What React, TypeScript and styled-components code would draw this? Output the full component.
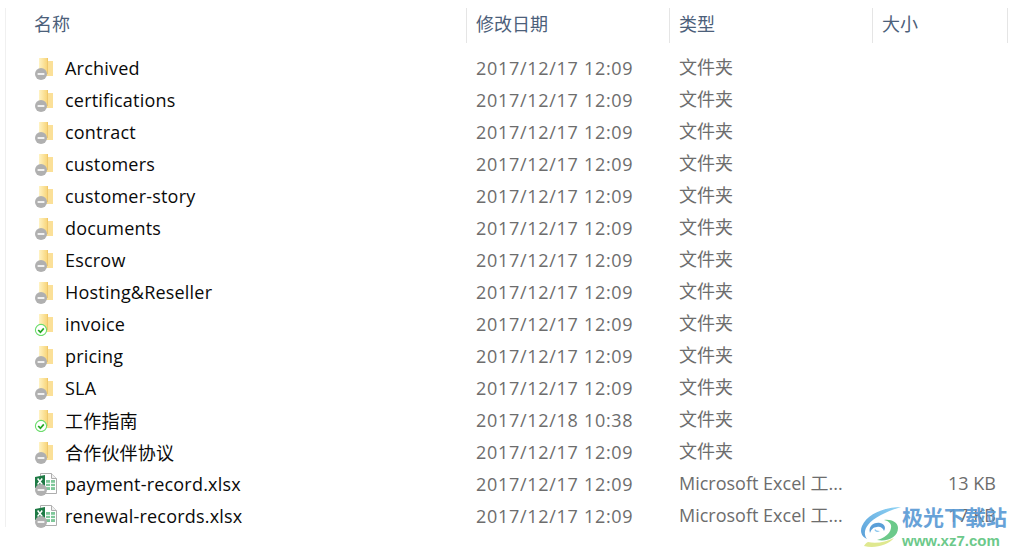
import React from 'react';
import styled, { createGlobalStyle } from 'styled-components';

const GlobalStyle = createGlobalStyle`
  html, body {
    margin: 0;
    width: 1018px;
    height: 557px;
    overflow: hidden;
    background: #fff;
    font-family: "Open Sans", "Noto Sans CJK SC", sans-serif;
  }
`;

const Page = styled.div`
  position: relative;
  width: 1018px;
  height: 557px;
  padding: 8px 0 0 5px;
  box-sizing: border-box;
`;

const Panel = styled.div`
  width: 1003px;
  height: 519px;
  border-left: 1px solid #f0f0f0;
`;

const Columns = styled.div`
  display: grid;
  grid-template-columns: 461px 203px 203px 135px;
`;

const HeaderRow = styled(Columns)`
  height: 35px;
  margin-bottom: 9px;
`;

const HeaderCell = styled.div<{ $first?: boolean }>`
  box-sizing: border-box;
  padding-left: ${(p) => (p.$first ? 28 : 9)}px;
  border-right: 1px solid #e5e5e5;
  color: #4c607a;
  font-size: 18px;
  line-height: 32px;
`;

const Row = styled(Columns)`
  height: 32px;
  align-items: center;
  font-size: 18px;
`;

const NameCell = styled.div`
  display: flex;
  align-items: center;
  gap: 12px;
  padding-left: 27px;
  color: #0a0a0a;
  letter-spacing: 0.2px;
`;

const Cell = styled.div`
  padding-left: 9px;
  color: #6d6d6d;
  white-space: nowrap;
  line-height: 31px;
  height: 32px;
`;

const DateCell = styled(Cell)`
  letter-spacing: 0.7px;
  line-height: 32px;
`;

const SizeCell = styled(Cell)`
  padding: 0 12px 0 0;
  text-align: right;
`;

const Icon = styled.svg`
  width: 20px;
  height: 24px;
  flex: none;
`;

const WideIcon = styled(Icon)`
  width: 24px;
  margin-right: -4px;
`;

const Watermark = styled.div`
  position: absolute;
  left: 858px;
  top: 504px;
  width: 156px;
  height: 48px;
  display: flex;
  pointer-events: none;
`;

const BrandText = styled.div`
  margin-left: 44px;
  display: flex;
  flex-direction: column;
`;

const BrandName = styled.div`
  color: #5b9bd5;
  font-family: "Noto Sans CJK SC", sans-serif;
  font-size: 21px;
  font-weight: 700;
  line-height: 25px;
  white-space: nowrap;
  opacity: 0.92;
`;

const BrandUrl = styled.div`
  color: #6cc98a;
  font-family: "Liberation Sans", sans-serif;
  font-size: 15px;
  font-weight: 700;
  line-height: 19px;
  margin-top: 2px;
  white-space: nowrap;
`;

const LogoMark = styled.svg`
  position: absolute;
  left: 0;
  top: 1px;
  width: 46px;
  height: 44px;
`;

type Status = 'off' | 'ok';

const GreyBadge = () => (
  <g>
    <circle cx="8" cy="18" r="6" fill="#b0b0b0" />
    <rect x="4.6" y="17.2" width="6.8" height="1.6" fill="#fff" />
  </g>
);

const Badge = ({ status }: { status: Status }) =>
  status === 'ok' ? (
    <g>
      <circle cx="8" cy="18" r="5.6" fill="#fff" stroke="#6bdc6b" strokeWidth="1.1" />
      <path d="M5.2 18l2.2 2.2 3.4-3.8" fill="none" stroke="#25a825" strokeWidth="1.7" />
    </g>
  ) : (
    <GreyBadge />
  );

const FolderIcon = ({ status }: { status: Status }) => (
  <Icon viewBox="0 0 20 24">
    <defs>
      <linearGradient id={`fold-${status}`} x1="0" y1="0" x2="1" y2="0">
        <stop offset="0" stopColor="#fff3c4" />
        <stop offset="1" stopColor="#f8d67c" />
      </linearGradient>
    </defs>
    <path d="M6 2l8 0v3h6v15H6z" fill="#fbe098" />
    <path d="M6 2h8v18H6z" fill={`url(#fold-${status})`} />
    <path d="M14 2h1v16h-1z" fill="#efc76c" />
    <Badge status={status} />
  </Icon>
);

const ExcelIcon = () => (
  <WideIcon viewBox="0 0 24 24">
    <path d="M7.5 1.5h11l5 5v15h-16z" fill="#fff" stroke="#aeaeae" />
    <path d="M18.5 1.5v5h5" fill="#f0f0f0" stroke="#aeaeae" />
    <path d="M13 8h9v10h-9z" fill="#7fc79a" />
    <path d="M13 11.3h9M13 14.6h9M17.5 8v10" stroke="#fff" />
    <path d="M2 5l10-2v13H2z" fill="#1e7a45" />
    <path d="M4.6 6.5l4.6 6M9.2 6.5l-4.6 6" stroke="#fff" strokeWidth="1.5" />
    <GreyBadge />
  </WideIcon>
);

const folderType = '文件夹';
const excelType = 'Microsoft Excel 工...';

const rows = [
  { name: 'Archived', date: '2017/12/17 12:09', type: folderType },
  { name: 'certifications', date: '2017/12/17 12:09', type: folderType },
  { name: 'contract', date: '2017/12/17 12:09', type: folderType },
  { name: 'customers', date: '2017/12/17 12:09', type: folderType },
  { name: 'customer-story', date: '2017/12/17 12:09', type: folderType },
  { name: 'documents', date: '2017/12/17 12:09', type: folderType },
  { name: 'Escrow', date: '2017/12/17 12:09', type: folderType },
  { name: 'Hosting&Reseller', date: '2017/12/17 12:09', type: folderType },
  { name: 'invoice', date: '2017/12/17 12:09', type: folderType, ok: true },
  { name: 'pricing', date: '2017/12/17 12:09', type: folderType },
  { name: 'SLA', date: '2017/12/17 12:09', type: folderType },
  { name: '工作指南', date: '2017/12/18 10:38', type: folderType, ok: true },
  { name: '合作伙伴协议', date: '2017/12/17 12:09', type: folderType },
  { name: 'payment-record.xlsx', date: '2017/12/17 12:09', type: excelType, size: '13 KB', excel: true },
  { name: 'renewal-records.xlsx', date: '2017/12/17 12:09', type: excelType, size: '17 KB', excel: true },
];

export default function App() {
  return (
    <>
      <GlobalStyle />
      <Page>
        <Panel>
          <HeaderRow>
            <HeaderCell $first>名称</HeaderCell>
            <HeaderCell>修改日期</HeaderCell>
            <HeaderCell>类型</HeaderCell>
            <HeaderCell>大小</HeaderCell>
          </HeaderRow>
          {rows.map((r) => (
            <Row key={r.name}>
              <NameCell>
                {r.excel ? <ExcelIcon /> : <FolderIcon status={r.ok ? 'ok' : 'off'} />}
                {r.name}
              </NameCell>
              <DateCell>{r.date}</DateCell>
              <Cell>{r.type}</Cell>
              <SizeCell>{r.size}</SizeCell>
            </Row>
          ))}
        </Panel>
        <Watermark>
          <LogoMark viewBox="0 0 46 44">
            <defs>
              <linearGradient id="swirl" x1="1" y1="0" x2="0" y2="1">
                <stop offset="0" stopColor="#8fd4f5" />
                <stop offset="1" stopColor="#5a9fd8" />
              </linearGradient>
            </defs>
            <path d="M43 2C27 2 9 9 4 21c-2.500 6 0 11 5 13-3-4-3-9 1-14C16 12 30 6 43 2z" fill="url(#swirl)" />
            <path d="M19 35c11 2 21-3 21-12 0-6-7-9-14-8 5 1 8 4 7 8-1 6-7 10-14 12z" fill="#6cc98a" />
            <path d="M12 28c-2-6 3-11 10-10 5 1 6 5 4 8-1-3-4-5-7-4-4 0-6 3-7 6z" fill="#5a9fd8" />
            <path d="M20 27c-3 0-4-2-3-3 1 1 2 2 5 2z" fill="#8fc8ee" />
            <path d="M6 41c11 3 24-1 30-8-8 4-18 6-26 4-2 1-3 2-4 4z" fill="#dfe88f" />
          </LogoMark>
          <BrandText>
            <BrandName>极光下载站</BrandName>
            <BrandUrl>www.xz7.com</BrandUrl>
          </BrandText>
        </Watermark>
      </Page>
    </>
  );
}
